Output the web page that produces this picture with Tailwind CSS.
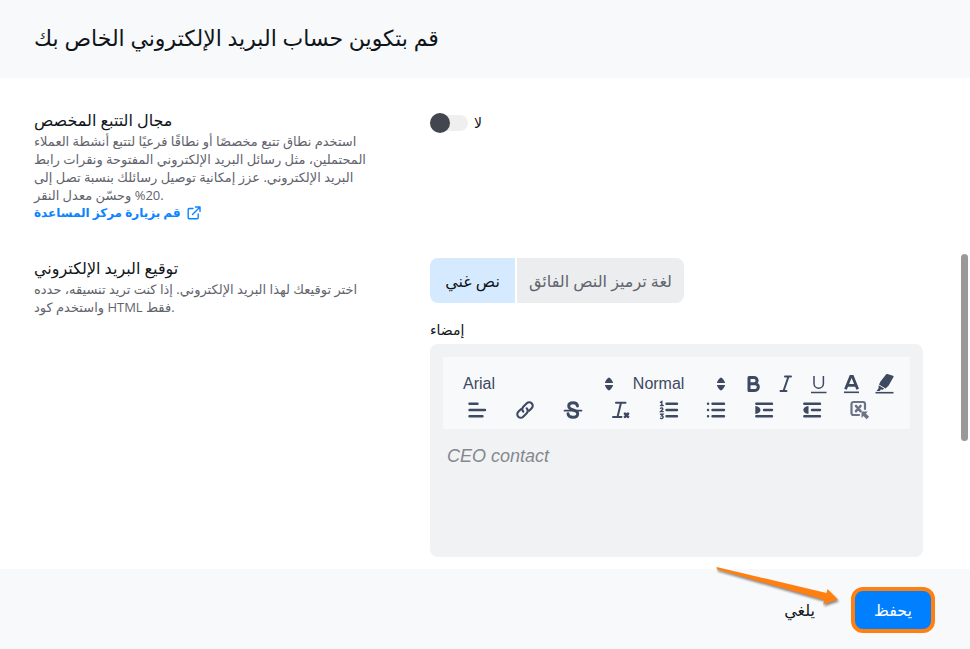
<!DOCTYPE html>
<html lang="ar" dir="ltr">
<head>
  <meta charset="UTF-8">
  <meta name="viewport" content="width=device-width, initial-scale=1.0">
  <title>قم بتكوين حساب البريد الإلكتروني الخاص بك</title>
  <script src="https://cdn.jsdelivr.net/npm/@tailwindcss/browser@4"></script>
</head>
<body class="h-screen flex flex-col overflow-hidden bg-white font-['Open_Sans','Noto_Sans','DejaVu_Sans',sans-serif] text-[#0f1419]">

  <!-- header -->
  <header class="h-[78px] shrink-0 flex items-center px-[34px] pb-1 bg-[#f8f9fb]">
    <h1 class="text-[22px] leading-8 font-medium">قم بتكوين حساب البريد الإلكتروني الخاص بك</h1>
  </header>

  <!-- settings -->
  <main class="relative flex-1 min-h-0 overflow-hidden pl-[34px] pr-[47px] pt-8">
    <section class="grid grid-cols-[340px_1fr] gap-x-14 h-[148px]">
      <div>
        <h2 class="text-base leading-5 mb-[2px]">مجال التتبع المخصص</h2>
        <p class="text-[13px] leading-[18px] text-[#5f646d]">استخدم نطاق تتبع مخصصًا أو نطاقًا فرعيًا لتتبع أنشطة العملاء المحتملين، مثل رسائل البريد الإلكتروني المفتوحة ونقرات رابط البريد الإلكتروني. عزز إمكانية توصيل رسائلك بنسبة تصل إلى 20% وحسّن معدل النقر.</p>
        <a href="#" class="flex items-center gap-[6px] text-xs leading-[18px] font-semibold text-[#0a84ff]">
          قم بزيارة مركز المساعدة
          <svg class="size-3.5" viewBox="0 0 14 14" fill="none" stroke="currentColor" stroke-width="1.4" stroke-linecap="round" stroke-linejoin="round"><path d="M6 2.5H2.200a1 1 0 0 0-1 1v8.200a1 1 0 0 0 1 1h8a1 1 0 0 0 1-1V8M8.500 1H13v4.500M13 1 5.500 8.500"/></svg>
        </a>
      </div>
      <div>
        <label class="inline-flex items-center gap-[6px] mt-[3px] text-sm leading-5">
          <input type="checkbox" role="switch" class="peer sr-only">
          <span class="flex items-center w-[38px] h-4 my-[2px] rounded-full bg-[#efefef]"><span class="size-5 shrink-0 rounded-full bg-[#42464e]"></span></span>
          لا
        </label>
      </div>
    </section>

    <section class="grid grid-cols-[340px_1fr] gap-x-14">
      <div>
        <h2 class="text-base leading-5 mb-[2px]">توقيع البريد الإلكتروني</h2>
        <p class="text-[13px] leading-[18px] text-[#5f646d]">اختر توقيعك لهذا البريد الإلكتروني. إذا كنت تريد تنسيقه، حدده واستخدم كود HTML فقط.</p>
      </div>
      <div>
        <div class="flex gap-[2px] h-[45px] text-base">
          <button type="button" class="w-[85px] rounded-l-lg bg-[#d6eaff]">نص غني</button>
          <button type="button" class="w-[167px] rounded-r-lg bg-[#ecedef] text-[#5f646d]">لغة ترميز النص الفائق</button>
        </div>
        <label for="signature" class="block mt-[17px] mb-1 text-sm leading-5">إمضاء</label>

        <div class="h-[213px] rounded-lg bg-[#f1f2f4] p-[13px]">
          <!-- toolbar -->
          <div class="h-[72px] pl-5 pr-[15px] pt-[13px] bg-[#f8f9fb] text-[#3d4a61]">
            <div class="flex items-center justify-between h-7 font-['Liberation_Sans',Arial,sans-serif] text-base">
              <div class="relative">
                <select aria-label="Font" class="block appearance-none w-[157px] h-5 mb-1 outline-none"><option>Arial</option></select>
                <svg class="absolute right-[6px] top-[5px] w-[10px] h-[14px] pointer-events-none" viewBox="0 0 10 14" fill="currentColor"><path d="M5 .5c1 0 4 3.500 4 5.500H1C1 4 4 .5 5 .5zM5 13.500c1 0 4-3.500 4-5.500H1c0 2 3 5.500 4 5.500z"/></svg>
              </div>
              <div class="relative">
                <select aria-label="Heading" class="block appearance-none w-[98px] h-6 outline-none"><option>Normal</option></select>
                <svg class="absolute right-[5px] top-[5px] w-[10px] h-[14px] pointer-events-none" viewBox="0 0 10 14" fill="currentColor"><path d="M5 .5c1 0 4 3.500 4 5.500H1C1 4 4 .5 5 .5zM5 13.500c1 0 4-3.500 4-5.500H1c0 2 3 5.500 4 5.500z"/></svg>
              </div>
              <button type="button" aria-label="Bold"><svg class="block size-5" viewBox="0 0 20 20" fill="none" stroke="currentColor" stroke-width="3" stroke-linejoin="round"><path d="M5 3.500h5a3.100 3.100 0 0 1 0 6.200H5zM5 9.700h6a3.300 3.300 0 0 1 0 6.700H5z"/></svg></button>
              <button type="button" aria-label="Italic"><svg class="block size-5" viewBox="0 0 20 20" fill="none" stroke="currentColor" stroke-width="2" stroke-linecap="round"><path d="M9 2.500h6M4.500 17h6M12.500 2.500 7.500 17"/></svg></button>
              <button type="button" aria-label="Underline"><svg class="block size-5" viewBox="0 0 20 20" fill="none" stroke="currentColor" stroke-width="1.500"><path d="M5 2v7.500a4.700 4.700 0 0 0 9.400 0V2M2 18.500h15.500"/></svg></button>
              <button type="button" aria-label="Text color"><svg class="block size-5" viewBox="0 0 20 20" fill="none" stroke="currentColor" stroke-width="2.800"><path d="M3.500 15.200 8.700 2.500h1.800L15.700 15.200M5.700 11.300h7.800"/><path stroke-width="1.600" d="M2 18.300h15"/></svg></button>
              <button type="button" aria-label="Highlight"><svg class="block size-5" viewBox="0 0 20 20" fill="currentColor"><path d="M11.200.3a1 1 0 0 1 1.200-.3l5.500 1.700a1 1 0 0 1 .6 1.400L13.500 11.700 10.500 14.500 4 10.500 5.500 7.500zM3.700 11.200 9.300 14.800 7.500 15.800 5.800 15.600 4.800 17 1.500 17 3.500 14.500z"/><path d="M.500 17.900h18v1.600H.500z"/></svg></button>
            </div>
            <div class="flex items-center justify-between h-6 pl-1 pr-[25px]">
              <button type="button" aria-label="Align"><svg class="block size-5" viewBox="0 0 20 20" fill="none" stroke="currentColor" stroke-width="2.400" stroke-linecap="round"><path d="M2.500 3.800h8M2.500 10h15.500M2.500 16.300h13"/></svg></button>
              <button type="button" aria-label="Link"><svg class="block size-5" viewBox="0 0 20 20" fill="none" stroke="currentColor" stroke-width="2.100" stroke-linecap="round"><path d="M8.300 11.700a3.500 3.500 0 0 1 0-4.900l3.500-3.500a3.400 3.400 0 0 1 4.900 4.900l-2.600 2.600M11.700 8.300a3.500 3.500 0 0 1 0 4.900l-3.500 3.500a3.400 3.400 0 0 1-4.900-4.900l2.600-2.600"/></svg></button>
              <button type="button" aria-label="Strikethrough"><svg class="block size-5" viewBox="0 0 20 20" fill="none" stroke="currentColor" stroke-width="2.900" stroke-linecap="round"><path d="M14.500 6C14.200 3.700 12.500 2.800 10 2.800 7.300 2.800 5.700 4 5.700 6c0 5 9 3 9 7.500 0 2.500-2 3.800-4.700 3.800-2.800 0-4.700-1.300-5-3.500"/><path stroke-width="1.700" d="M1.500 10.700h17"/></svg></button>
              <button type="button" aria-label="Clear format"><svg class="block size-5" viewBox="0 0 20 20" fill="none" stroke="currentColor" stroke-width="2" stroke-linecap="round"><path d="M5 2.800h9.500M2 17h8.500M10 2.800 6.500 17"/><path stroke-width="2.700" d="m14 13.700 3 3m0-3-3 3"/></svg></button>
              <button type="button" aria-label="Ordered list"><svg class="block size-5" viewBox="0 0 20 20" fill="none" stroke="currentColor" stroke-width="2.400" stroke-linecap="round"><path d="M7.500 3.800H18M7.500 10H18M7.500 16.300H18"/><path stroke-width="1.400" d="M1.500 2.300l1.300-.8V5.500M1.500 5.500h2.700M1.500 8.300c1-.8 2.500-.3 2.300.8-.1.800-1.500 1.500-2.300 2.500h2.700M1.500 14.200h2.500l-1.300 1.700c2.200-.2 1.800 2.700-.2 2.700l-1-.3"/></svg></button>
              <button type="button" aria-label="Bullet list"><svg class="block size-5" viewBox="0 0 20 20" fill="none" stroke="currentColor" stroke-width="2.400" stroke-linecap="round"><path d="M6.500 3.800H18M6.500 10H18M6.500 16.300H18M2 3.800h.1M2 10h.1M2 16.300h.1"/></svg></button>
              <button type="button" aria-label="Indent"><svg class="block size-5" viewBox="0 0 20 20" fill="none" stroke="currentColor" stroke-width="2.400" stroke-linecap="round"><path d="M2.300 3.800H18M10 10h8M2.300 16.300H18"/><path fill="currentColor" stroke="none" d="M1.300 6c3.500.3 5.200 2.200 5.200 4s-1.700 3.700-5.200 4z"/></svg></button>
              <button type="button" aria-label="Outdent"><svg class="block size-5" viewBox="0 0 20 20" fill="none" stroke="currentColor" stroke-width="2.400" stroke-linecap="round"><path d="M2.300 3.800H18M10 10h8M2.300 16.300H18"/><path fill="currentColor" stroke="none" d="M6.500 6C3 6.300 1.300 8.200 1.300 10s1.700 3.700 5.200 4z"/></svg></button>
              <button type="button" aria-label="Variable" class="text-[#6b7386]"><svg class="block size-5" viewBox="0 0 20 20" fill="none" stroke="currentColor" stroke-width="2.200" stroke-linecap="round"><path d="M9 15H3.500a2 2 0 0 1-2-2V4a2 2 0 0 1 2-2H13a2 2 0 0 1 2 2v5"/><path stroke-width="2.600" d="m6 6 4.500 5.200M10.500 6 6 11.200"/><path fill="currentColor" stroke="none" d="M11.500 11.500h6.300l-1.900 1.900 3.200 3.400-2.500 2.500-3.200-3.200-1.900 1.900z"/></svg></button>
            </div>
          </div>
          <textarea id="signature" class="block w-full h-28 px-1 pt-[15px] resize-none outline-none font-['Liberation_Sans',Arial,sans-serif] italic text-lg leading-6 text-[#85888d]">CEO contact</textarea>
        </div>
      </div>
    </section>

    <!-- scrollbar thumb -->
    <div class="absolute right-[2px] top-[176px] w-[7px] h-[187px] rounded-full bg-[#999]"></div>
  </main>

  <!-- footer -->
  <footer class="relative h-20 shrink-0 flex items-center justify-end gap-9 pr-[35px] pt-[2px] bg-[#f8f9fb] text-base">
    <button type="button">يلغي</button>
    <button type="button" class="w-[84px] h-[46px] rounded-xl border-4 border-[#ff7f11] bg-[#0080ff] text-white">يحفظ</button>
    <svg class="absolute right-[132px] -top-[4px] w-[126px] h-12 overflow-visible drop-shadow-[1px_2px_1px_rgba(0,0,0,0.45)]" viewBox="0 0 126 48" fill="#ff7f11"><path d="M4.500 2 5 4.500 112.500 35 111 39.500 126 34.500 115.500 24 114.500 28z"/></svg>
  </footer>

</body>
</html>
